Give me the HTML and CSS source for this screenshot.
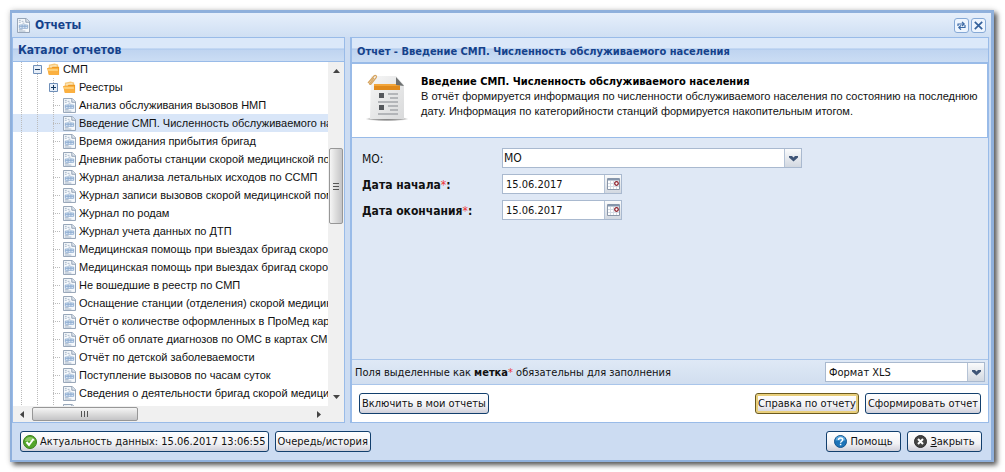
FILE: index.html
```html
<!DOCTYPE html>
<html lang="ru">
<head>
<meta charset="utf-8">
<title>Отчеты</title>
<link rel="stylesheet" href="styles.css">
</head>
<body>
<svg class="defs" aria-hidden="true">
  <symbol id="doc" viewBox="0 0 14 16">
    <path d="M.5.5h9.500l3.500 3.500v11.500h-13z" fill="#f6f9fc" stroke="#8d9db1"/>
    <path d="M9.500.5v4h4" fill="#dfe6ee" stroke="#8d9db1"/>
    <path d="M2 2.500h2M2 4.500h2M5 3.500h2M6 5.500h2M2 12.500h4M2 14h7" stroke="#a3b3c6" fill="none"/>
    <path d="M2.500 7.500h9v3.500h-9zM5.500 7v4M8.500 7v4M2.500 9h9" stroke="#8fadd2" fill="#e9f1fa"/>
  </symbol>
  <symbol id="folder" viewBox="0 0 14 14">
    <path d="M2 2l6-1.500 4 1v5H2z" fill="#f6c879"/>
    <path d="M3 3l7-1 1 3H3z" fill="#fbe3b4"/>
    <path d="M1 5h4l1-1h7v8.500H2z" fill="#ee9a22"/>
    <path d="M0 5.500h12l1 7.500H2z" fill="#fbb040"/>
    <path d="M1 6.500h10.500l.3 2H1.500z" fill="#fdcf78"/>
  </symbol>
  <symbol id="chevron" viewBox="0 0 9 7"><path d="M0 1h3l1.500 1.500L6 1h3v1.500L4.500 6.500 0 2.500z" fill="#3f5576"/></symbol>
  <symbol id="calendar" viewBox="0 0 13 12">
    <path d="M.5.5h12v11H.5z" fill="#fff" stroke="#8a96a8"/>
    <path d="M1 1.500h11" stroke="#8395ac" stroke-width="2"/>
    <path d="M3.500 3v8M6.500 3v8M1 5.500h6M1 8.500h11M9.500 8v3" stroke="#d5dce5"/>
    <circle cx="9.500" cy="5.500" r="1.800" fill="#fff" stroke="#8b1f2b" stroke-width="1.300"/>
  </symbol>
  <symbol id="plus" viewBox="0 0 9 9"><path d="M.5.5h8v8h-8z" fill="#e6eef8" stroke="#6f8fb9"/><path d="M2 4.500h5M4.500 2v5" stroke="#173a63"/></symbol>
  <symbol id="minus" viewBox="0 0 9 9"><path d="M.5.5h8v8h-8z" fill="#e6eef8" stroke="#6f8fb9"/><path d="M2 4.500h5" stroke="#173a63"/></symbol>
</svg>

<main class="window">
  <header class="titlebar">
    <svg class="doc"><use href="#doc"/></svg>
    <h1 class="title">Отчеты</h1>
    <button class="tool" aria-label="Обновить"><svg width="9" height="9" viewBox="0 0 9 9" fill="none" stroke="#3c6aa5" stroke-width="1.200"><path d="M1 5V3h6M5 .8l2.200 2.200L5 5M8 4v2.500H2M4 4.300L1.800 6.500 4 8.700"/></svg></button>
    <button class="tool" aria-label="Закрыть окно"><svg width="9" height="9" viewBox="0 0 9 9" stroke="#35619b" stroke-width="1.700"><path d="M.8.8l7.400 7.400M8.200.8L.8 8.200"/></svg></button>
  </header>

  <div class="columns">
    <section class="catalog">
      <h2 class="panel-title">Каталог отчетов</h2>
      <div class="tree-frame">
        <ul class="tree">
          <li class="node"><i class="guide"></i><i class="guide knot"><svg class="toggle"><use href="#minus"/></svg></i><i class="cell"><svg class="folder"><use href="#folder"/></svg></i><span class="name">СМП</span></li>
          <li class="node"><i class="guide"></i><i class="guide"></i><i class="guide knot"><svg class="toggle"><use href="#plus"/></svg></i><i class="cell"><svg class="folder"><use href="#folder"/></svg></i><span class="name">Реестры</span></li>
          <li class="node"><i class="guide"></i><i class="guide"></i><i class="guide elbow"></i><i class="cell"><svg class="doc"><use href="#doc"/></svg></i><span class="name">Анализ обслуживания вызовов НМП</span></li>
          <li class="node selected"><i class="guide"></i><i class="guide"></i><i class="guide elbow"></i><i class="cell"><svg class="doc"><use href="#doc"/></svg></i><span class="name">Введение СМП. Численность обслуживаемого населения</span></li>
          <li class="node"><i class="guide"></i><i class="guide"></i><i class="guide elbow"></i><i class="cell"><svg class="doc"><use href="#doc"/></svg></i><span class="name">Время ожидания прибытия бригад</span></li>
          <li class="node"><i class="guide"></i><i class="guide"></i><i class="guide elbow"></i><i class="cell"><svg class="doc"><use href="#doc"/></svg></i><span class="name">Дневник работы станции скорой медицинской помощи</span></li>
          <li class="node"><i class="guide"></i><i class="guide"></i><i class="guide elbow"></i><i class="cell"><svg class="doc"><use href="#doc"/></svg></i><span class="name">Журнал анализа летальных исходов по ССМП</span></li>
          <li class="node"><i class="guide"></i><i class="guide"></i><i class="guide elbow"></i><i class="cell"><svg class="doc"><use href="#doc"/></svg></i><span class="name">Журнал записи вызовов скорой медицинской помощи</span></li>
          <li class="node"><i class="guide"></i><i class="guide"></i><i class="guide elbow"></i><i class="cell"><svg class="doc"><use href="#doc"/></svg></i><span class="name">Журнал по родам</span></li>
          <li class="node"><i class="guide"></i><i class="guide"></i><i class="guide elbow"></i><i class="cell"><svg class="doc"><use href="#doc"/></svg></i><span class="name">Журнал учета данных по ДТП</span></li>
          <li class="node"><i class="guide"></i><i class="guide"></i><i class="guide elbow"></i><i class="cell"><svg class="doc"><use href="#doc"/></svg></i><span class="name">Медицинская помощь при выездах бригад скорой</span></li>
          <li class="node"><i class="guide"></i><i class="guide"></i><i class="guide elbow"></i><i class="cell"><svg class="doc"><use href="#doc"/></svg></i><span class="name">Медицинская помощь при выездах бригад скорой</span></li>
          <li class="node"><i class="guide"></i><i class="guide"></i><i class="guide elbow"></i><i class="cell"><svg class="doc"><use href="#doc"/></svg></i><span class="name">Не вошедшие в реестр по СМП</span></li>
          <li class="node"><i class="guide"></i><i class="guide"></i><i class="guide elbow"></i><i class="cell"><svg class="doc"><use href="#doc"/></svg></i><span class="name">Оснащение станции (отделения) скорой медицинской</span></li>
          <li class="node"><i class="guide"></i><i class="guide"></i><i class="guide elbow"></i><i class="cell"><svg class="doc"><use href="#doc"/></svg></i><span class="name">Отчёт о количестве оформленных в ПроМед карт</span></li>
          <li class="node"><i class="guide"></i><i class="guide"></i><i class="guide elbow"></i><i class="cell"><svg class="doc"><use href="#doc"/></svg></i><span class="name">Отчёт об оплате диагнозов по ОМС в картах СМП</span></li>
          <li class="node"><i class="guide"></i><i class="guide"></i><i class="guide elbow"></i><i class="cell"><svg class="doc"><use href="#doc"/></svg></i><span class="name">Отчёт по детской заболеваемости</span></li>
          <li class="node"><i class="guide"></i><i class="guide"></i><i class="guide elbow"></i><i class="cell"><svg class="doc"><use href="#doc"/></svg></i><span class="name">Поступление вызовов по часам суток</span></li>
          <li class="node"><i class="guide"></i><i class="guide"></i><i class="guide elbow"></i><i class="cell"><svg class="doc"><use href="#doc"/></svg></i><span class="name">Сведения о деятельности бригад скорой медицинской</span></li>
          <li class="node"><i class="guide"></i><i class="guide"></i><i class="guide elbow"></i><i class="cell"><svg class="doc"><use href="#doc"/></svg></i></li>
        </ul>
        <div class="vscroll" aria-hidden="true">
          <svg width="7" height="4" viewBox="0 0 7 4"><path d="M0 4L3.500 0 7 4z" fill="#444"/></svg>
          <div class="vtrack"><div class="vthumb"></div></div>
          <svg width="7" height="4" viewBox="0 0 7 4"><path d="M0 0L3.500 4 7 0z" fill="#444"/></svg>
        </div>
        <div class="hscroll" aria-hidden="true">
          <svg width="4" height="7" viewBox="0 0 4 7"><path d="M4 0L0 3.500 4 7z" fill="#444"/></svg>
          <div class="htrack"><div class="hthumb"></div></div>
          <svg width="4" height="7" viewBox="0 0 4 7"><path d="M0 0L4 3.500 0 7z" fill="#444"/></svg>
        </div>
      </div>
    </section>

    <section class="report">
      <h2 class="panel-title">Отчет - Введение СМП. Численность обслуживаемого населения</h2>
      <div class="info">
        <svg class="picture" viewBox="0 0 42 48">
          <defs>
            <linearGradient id="sheet" x2="1" y2="1"><stop offset="0" stop-color="#f6f6f6"/><stop offset="1" stop-color="#d9dadb"/></linearGradient>
            <radialGradient id="shade"><stop offset="0" stop-color="#777"/><stop offset=".7" stop-color="#aaa"/><stop offset="1" stop-color="#eee"/></radialGradient>
          </defs>
          <ellipse cx="21" cy="45" rx="21" ry="2" fill="url(#shade)"/>
          <path d="M5 2h25l8 9v34H4z" fill="url(#sheet)"/>
          <path d="M8 10h26v6H8z" fill="#e08a1c"/><path d="M8 10h26v2H8z" fill="#f2a53a"/>
          <path d="M30 3l8 9-8-1z" fill="#6d7071"/>
          <path d="M13 19h5v5h-5zM13 31h5v5h-5z" fill="#55585c"/>
          <path d="M22 20h10M24 24h8M22 32h10M24 36h8M12 28h20M12 40h20" stroke="#a4a7aa" stroke-width="1.400"/>
          <path d="M2 9l6-7c1.500-1.500 3.500 0 2 2L5 10c-1 1-2 0-1-1l4-5" stroke="#d6a45f" stroke-width="1.200" fill="none"/>
        </svg>
        <div class="about">
          <h3 class="about-title">Введение СМП. Численность обслуживаемого населения</h3>
          <p class="about-text">В отчёт формируется информация по численности обслуживаемого населения по состоянию на последнюю дату. Информация по категорийности станций формируется накопительным итогом.</p>
        </div>
      </div>
      <form class="fields">
        <label class="label" for="mo">МО:</label>
        <div class="box wide"><select class="value large" id="mo"><option>МО</option></select><span class="trigger"><svg width="9" height="7"><use href="#chevron"/></svg></span></div>
        <label class="label strong" for="from">Дата начала<span class="star">*</span>:</label>
        <div class="box date"><input class="value" id="from" value="15.06.2017"><button class="trigger" type="button" aria-label="Выбрать дату начала"><svg width="13" height="12"><use href="#calendar"/></svg></button></div>
        <label class="label strong" for="to">Дата окончания<span class="star">*</span>:</label>
        <div class="box date"><input class="value" id="to" value="15.06.2017"><button class="trigger" type="button" aria-label="Выбрать дату окончания"><svg width="13" height="12"><use href="#calendar"/></svg></button></div>
      </form>
      <div class="note">
        <p class="note-text">Поля выделенные как <b>метка</b><span class="star">*</span> обязательны для заполнения</p>
        <div class="box format"><select class="value" aria-label="Формат"><option>Формат XLS</option></select><span class="trigger"><svg width="9" height="7"><use href="#chevron"/></svg></span></div>
      </div>
      <div class="actions">
        <button class="button">Включить в мои отчеты</button>
        <span class="spring"></span>
        <button class="button focused">Справка по отчету</button>
        <button class="button">Сформировать отчет</button>
      </div>
    </section>
  </div>

  <footer class="footer">
    <button class="button"><svg width="14" height="14" viewBox="0 0 14 14"><circle cx="7" cy="7" r="6.500" fill="#54a52b" stroke="#397f1a"/><path d="M2 6a5 4 0 0 1 10 0z" fill="#8cc963"/><path d="M3.500 7l2.500 3 4.500-6" fill="none" stroke="#fff" stroke-width="2"/></svg>Актуальность данных: 15.06.2017 13:06:55</button>
    <button class="button">Очередь/история</button>
    <span class="spring"></span>
    <button class="button roomy"><svg width="13" height="13" viewBox="0 0 13 13"><circle cx="6.500" cy="6.500" r="6" fill="#1d74b8" stroke="#15558d"/><path d="M1.500 5.500a5 4.500 0 0 1 10 0z" fill="#5ba7dc"/><path d="M4.500 5c0-2.800 4.200-2.500 4.200-.3 0 1.600-2.100 1.500-2.100 3M6.600 8.800v1.500" fill="none" stroke="#fff" stroke-width="1.500"/></svg>Помощь</button>
    <button class="button roomy"><svg width="13" height="13" viewBox="0 0 13 13"><circle cx="6.500" cy="6.500" r="6" fill="#444" stroke="#2c2c2c"/><path d="M4 4l5 5M9 4L4 9" stroke="#fff" stroke-width="2"/></svg><span><u>З</u>акрыть</span></button>
  </footer>
</main>
</body>
</html>
```
FILE: styles.css
```css
* { box-sizing: border-box; }
body {
  margin: 0;
  padding: 10px 11px 11px 10px;
  min-height: 100vh;
  display: flex;
  background: #fff;
  font: 11px/15px "DejaVu Sans Condensed", "DejaVu Sans", sans-serif;
  color: #111;
}
h1, h2, h3, p, ul { margin: 0; padding: 0; font: inherit; }
button, input, select { font: inherit; color: inherit; margin: 0; }
svg { display: block; flex: none; }
.defs { position: absolute; width: 0; height: 0; }

.window {
  flex: 1;
  min-width: 0;
  display: flex;
  flex-direction: column;
  border: solid #8fb0dc;
  border-width: 3px 3px 2px 2px;
  background: #ccdcf2;
  box-shadow: 3px 3px 5px #555, 0 0 6px #ddd;
}
.titlebar {
  height: 24px;
  display: flex;
  align-items: center;
  gap: 2px;
  padding: 0 5px;
  background: linear-gradient(#e6effb, #cfdff3);
}
.doc { width: 13px; height: 15px; }
.title { flex: 1; padding-left: 3px; font-size: 12px; font-weight: bold; color: #15428b; }
.tool {
  width: 15px;
  height: 15px;
  display: grid;
  place-items: center;
  padding: 0;
  border: 1px solid #86a9d6;
  border-radius: 3px;
  background: #eef5fe;
}
.columns { flex: 1; min-height: 0; display: flex; gap: 5px; padding-right: 2px; }
.catalog, .report { display: flex; flex-direction: column; border: 1px solid #99bbe8; }
.catalog { flex: 0 1 333px; min-width: 200px; }
.report { flex: 1 1 400px; min-width: 0; border-left-width: 2px; }
.panel-title {
  height: 24px;
  padding: 0 5px;
  font-size: 12px;
  line-height: 25px;
  font-weight: bold;
  color: #15428b;
  white-space: nowrap;
  border-bottom: 1px solid #99bbe8;
  background: linear-gradient(#dbe8f9 0 10px, #aac6ec 11px, #bfd4f0 12px, #cbddf4);
}

.tree-frame {
  flex: 1;
  min-height: 0;
  display: grid;
  grid-template: minmax(0, 1fr) 16px / minmax(0, 1fr) 16px;
  background: #f0f0f0;
}
.tree {
  overflow: hidden;
  height: 344px;
  display: flex;
  flex-direction: column;
  list-style: none;
  background: #fff;
  font: 11px/18px "Liberation Sans", Arial, sans-serif;
}
.node { flex: none; height: 18px; display: flex; white-space: nowrap; }
.node:first-child { height: 16px; align-items: flex-end; }
.selected { background: #d9e6f8; }
.guide, .cell { flex: none; width: 16px; height: 18px; display: grid; place-items: center; }
.guide { background: repeating-linear-gradient(#bbb 0 1px, transparent 1px 2px) 8px 0 / 1px 100% no-repeat; }
.elbow {
  background:
    repeating-linear-gradient(#bbb 0 1px, transparent 1px 2px) 8px 0 / 1px 100% no-repeat,
    repeating-linear-gradient(90deg, #bbb 0 1px, transparent 1px 2px) 8px 9px / 8px 1px no-repeat;
}
.toggle { width: 9px; height: 9px; }
.folder { width: 13px; height: 13px; }
.name { padding-left: 2px; }

.vscroll, .hscroll { display: flex; align-items: center; background: #f0f0f0; }
.vscroll { flex-direction: column; padding: 7px 0; }
.vtrack { flex: 1; width: 14px; padding-top: 75px; }
.vthumb {
  height: 76px;
  border: 1px solid #979797;
  border-radius: 2px;
  background:
    repeating-linear-gradient(#555 0 1px, transparent 1px 3px) center / 6px 7px no-repeat,
    linear-gradient(90deg, #f5f5f5, #dcdcdc 50%, #c4c4c6);
}
.hscroll { padding: 0 7px; }
.htrack { flex: 1; padding-left: 8px; }
.hthumb {
  width: 106px;
  height: 14px;
  border: 1px solid #979797;
  border-radius: 2px;
  background:
    repeating-linear-gradient(90deg, #555 0 1px, transparent 1px 3px) center / 8px 6px no-repeat,
    linear-gradient(#f5f5f5, #dcdcdc 50%, #c4c4c6);
}

.report .panel-title { height: 26px; border-bottom-width: 2px; font-size: 11px; line-height: 27px; }
.info {
  display: flex;
  gap: 13px;
  min-height: 74px;
  padding: 10px 4px 10px 14px;
  border-right: 1px solid #99bbe8;
  border-bottom: 1px solid #99bbe8;
  background: #fff;
}
.picture { width: 42px; height: 48px; }
.about { flex: 1; min-width: 0; }
.about-title { font-weight: bold; color: #000; }
.about-text { font-family: "Liberation Sans", Arial, sans-serif; }
.fields {
  flex: 1;
  display: grid;
  grid-template-columns: 140px minmax(0, 1fr);
  grid-auto-rows: 20px;
  gap: 6px 0;
  padding: 10px;
  background: #dfe8f5;
}
.label { font-size: 12px; line-height: 22px; }
.strong { font-weight: bold; }
.star { color: #e33; font-weight: normal; }
.box { display: flex; height: 20px; border: 1px solid #a9b9cf; background: #fff; }
.wide { max-width: 300px; }
.date { width: 120px; }
.format { width: 160px; }
.value {
  flex: 1;
  min-width: 0;
  appearance: none;
  padding: 0 3px;
  border: 0;
  border-radius: 0;
  background: transparent;
  outline: 0;
}
.large { padding: 0 1px; font-size: 12px; }
.trigger {
  flex: none;
  width: 17px;
  display: grid;
  place-items: center;
  padding: 0;
  border: 0;
  border-left: 1px solid #b5c3d6;
  background: linear-gradient(#fafbfc, #d2d8e1);
}
.note {
  display: flex;
  align-items: center;
  justify-content: space-between;
  min-height: 26px;
  padding: 0 3px;
  border-top: 1px solid #a9c5ea;
  border-bottom: 1px solid #a9c5ea;
  background: linear-gradient(#dfe9f6, #d1deef);
}
.actions, .footer { display: flex; align-items: center; gap: 6px; }
.actions { height: 37px; padding: 0 7px; background: #fff; }
.spring { flex: 1; }
.button {
  height: 21px;
  display: flex;
  align-items: center;
  justify-content: center;
  gap: 3px;
  padding: 0 2px;
  border: 1px solid #123f6d;
  border-radius: 3px;
  background: linear-gradient(#fff, #f2f2f5 60%, #cfcfd9);
  white-space: nowrap;
}
.focused { border-color: #6b5a1e; box-shadow: inset 0 0 0 2px #e9cf7c; }
.roomy { min-width: 75px; padding: 0 5px; }
.footer { height: 37px; padding: 0 9px 0 8px; }
```
